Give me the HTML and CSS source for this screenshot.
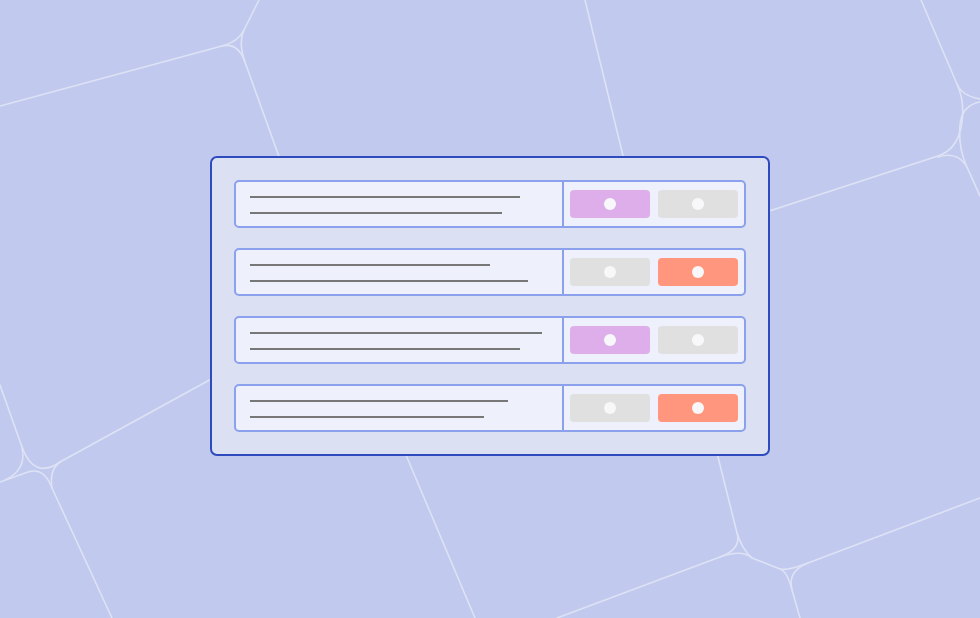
FILE: index.html
```
<!DOCTYPE html>
<html lang="en">
<head>
<meta charset="utf-8">
<title>Toggle list</title>
<link rel="stylesheet" href="styles.css">
</head>
<body>
<div class="stage">
  <svg class="backdrop" viewBox="0 0 980 618" width="980" height="618" aria-hidden="true">
    <g fill="none" stroke="#dde2f4" stroke-width="1.6" stroke-linecap="round">
      <!-- top-left junction -->
      <path d="M0,106 L222,46 Q238,42 244,30 L259,0"/>
      <path d="M222,46 Q238,42 245,62"/>
      <path d="M244,30 Q238,42 245,62 L282,165"/>
      <path d="M403,448 L475,618"/>
      <!-- line D -->
      <path d="M585,0 L626,168"/>
      <path d="M715,445 L737,533"/>
      <!-- bottom-right junctions -->
      <path d="M737,533 Q742,549 720,557 L557,618"/>
      <path d="M737,533 Q742,549 752,558 L780,569 Q787,571 808,563 L980,498"/>
      <path d="M720,557 Q742,549 752,558"/>
      <path d="M780,569 Q787,571 792,590 L800,618"/>
      <path d="M808,563 Q787,571 792,590"/>
      <!-- top-right junctions -->
      <path d="M921,0 L957,84 Q966,104 961,128 Q956,150 938,156 L760,214"/>
      <path d="M957,84 Q962,96 980,99"/>
      <path d="M980,102 Q962,105 960,125 Q958,146 966,165"/>
      <path d="M938,157 Q956,151 966,165 L980,196"/>
      <!-- bottom-left junction -->
      <path d="M0,385 L22,447 Q34,480 60,462 L215,377"/>
      <path d="M22,447 Q27,470 5,480"/>
      <path d="M0,482 L28,472 Q44,467 52,488 L112,618"/>
      <path d="M60,462 Q49,470 52,488"/>
    </g>
  </svg>

  <div class="panel">
    <div class="row">
      <div class="text">
        <span class="line" style="width:270px"></span>
        <span class="line" style="width:252px"></span>
      </div>
      <div class="opts">
        <span class="opt opt-purple"><i class="dot"></i></span>
        <span class="opt opt-grey"><i class="dot"></i></span>
      </div>
    </div>
    <div class="row">
      <div class="text">
        <span class="line" style="width:240px"></span>
        <span class="line" style="width:278px"></span>
      </div>
      <div class="opts">
        <span class="opt opt-grey"><i class="dot"></i></span>
        <span class="opt opt-orange"><i class="dot"></i></span>
      </div>
    </div>
    <div class="row">
      <div class="text">
        <span class="line" style="width:292px"></span>
        <span class="line" style="width:270px"></span>
      </div>
      <div class="opts">
        <span class="opt opt-purple"><i class="dot"></i></span>
        <span class="opt opt-grey"><i class="dot"></i></span>
      </div>
    </div>
    <div class="row">
      <div class="text">
        <span class="line" style="width:258px"></span>
        <span class="line" style="width:234px"></span>
      </div>
      <div class="opts">
        <span class="opt opt-grey"><i class="dot"></i></span>
        <span class="opt opt-orange"><i class="dot"></i></span>
      </div>
    </div>
  </div>
</div>
</body>
</html>
```
FILE: styles.css
```
* {
  box-sizing: border-box;
}

html, body {
  margin: 0;
  padding: 0;
  width: 980px;
  height: 618px;
  overflow: hidden;
  background: #c1caee;
  font-family: "Liberation Sans", Arial, sans-serif;
}

.stage {
  position: relative;
  width: 980px;
  height: 618px;
  display: flex;
  justify-content: center;
  align-items: flex-start;
  padding-top: 156px;
}

.backdrop {
  position: absolute;
  left: 0;
  top: 0;
  display: block;
}

.panel {
  position: relative;
  width: 560px;
  height: 300px;
  background: #dbe0f3;
  border: 2px solid #2e4bbe;
  border-radius: 7px;
  padding: 22px;
  display: flex;
  flex-direction: column;
  gap: 20px;
}

.row {
  height: 48px;
  display: flex;
  background: #eef1fb;
  border: 2px solid #8ba1ee;
  border-radius: 5px;
}

.text {
  flex: 1;
  border-right: 2px solid #8ba1ee;
  padding: 14px 0 0 14px;
  display: flex;
  flex-direction: column;
  gap: 14px;
}

.line {
  display: block;
  height: 2px;
  background: #777777;
}

.opts {
  width: 180px;
  padding: 0 6px;
  display: flex;
  align-items: center;
  gap: 8px;
}

.opt {
  width: 80px;
  height: 28px;
  border-radius: 4px;
  display: flex;
  align-items: center;
  justify-content: center;
}

.opt-purple {
  background: #ddaee9;
}

.opt-grey {
  background: #e0e0e0;
}

.opt-orange {
  background: #ff967d;
}

.dot {
  width: 12px;
  height: 12px;
  border-radius: 50%;
  background: #f8f8fa;
}
```
